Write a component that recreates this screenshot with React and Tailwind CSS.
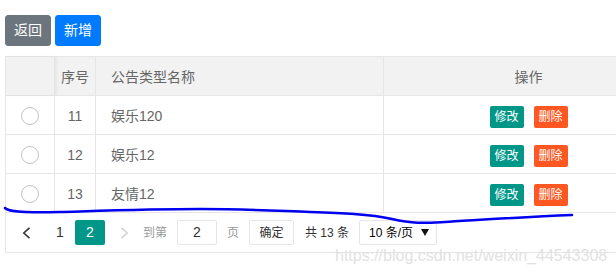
import React from 'react';

const rows = [
  { id: 11, name: '娱乐120' },
  { id: 12, name: '娱乐12' },
  { id: 13, name: '友情12' },
];

const Radio = () => (
  <span className="block w-[18px] h-[18px] rounded-full border-[1.5px] border-[#c2c2c2] bg-white" />
);

const Chevron = ({ dir, color }) => (
  <svg width="9" height="12" viewBox="0 0 9 12" fill="none">
    <path
      d={dir === 'left' ? 'M7.5 0.8 L1.8 6 L7.5 11.2' : 'M1.5 0.8 L7.2 6 L1.5 11.2'}
      stroke={color}
      strokeWidth="1.6"
    />
  </svg>
);

export default function App() {
  return (
    <div
      className="relative w-[616px] h-[275px] overflow-hidden bg-white"
      style={{ fontFamily: '"Liberation Sans", "Noto Sans CJK SC", sans-serif' }}
    >
      <div className="pt-[15px] pl-[5px]">
        {/* Toolbar */}
        <div className="flex gap-[4px]">
          <button className="h-[31px] px-[8px] border border-[#6c757d] bg-[#6c757d] text-white text-[14px] leading-[21px] rounded-[3px]">
            返回
          </button>
          <button className="h-[31px] px-[8px] border border-[#007bff] bg-[#007bff] text-white text-[14px] leading-[21px] rounded-[3px]">
            新增
          </button>
        </div>

        {/* Table */}
        <div className="mt-[10px] w-[700px] border-l border-t border-[#e6e6e6] text-[14px] text-[#666]">
          <div className="flex h-[39px] bg-[#f2f2f2] border-b border-[#e6e6e6]">
            <div className="w-[49px] border-r border-[#e6e6e6] shadow-[2px_0_3px_rgba(0,0,0,0.05)]" />
            <div className="w-[41px] border-r border-[#e6e6e6] pt-[2px] flex items-center justify-center">序号</div>
            <div className="w-[288px] border-r border-[#e6e6e6] pt-[2px] flex items-center pl-[15px]">公告类型名称</div>
            <div className="w-[290px] border-r border-[#e6e6e6] pt-[2px] flex items-center justify-center">操作</div>
          </div>
          {rows.map((r) => (
            <div key={r.id} className="flex h-[39px] border-b border-[#e6e6e6]">
              <div className="w-[49px] border-r border-[#e6e6e6] pt-[2px] flex items-center justify-center">
                <Radio />
              </div>
              <div className="w-[41px] border-r border-[#e6e6e6] pt-[2px] flex items-center justify-center">{r.id}</div>
              <div className="w-[288px] border-r border-[#e6e6e6] pt-[2px] flex items-center pl-[15px]">{r.name}</div>
              <div className="w-[290px] border-r border-[#e6e6e6] pt-[3px] flex items-center justify-center gap-[10px]">
                <span className="h-[22px] w-[34px] flex items-center justify-center bg-[#009688] text-white text-[12px] rounded-[2px]">修改</span>
                <span className="h-[22px] w-[34px] flex items-center justify-center bg-[#ff5722] text-white text-[12px] rounded-[2px]">删除</span>
              </div>
            </div>
          ))}

          {/* Pagination */}
          <div className="flex items-center h-[40px] border-b border-[#e6e6e6] text-[12px] text-[#333]">
            <span className="ml-[5px] w-[30px] h-[25px] flex items-center justify-center">
              <Chevron dir="left" color="#333" />
            </span>
            <span className="ml-[4px] w-[30px] h-[25px] flex items-center justify-center text-[14px]">1</span>
            <span className="w-[30px] h-[25px] flex items-center justify-center bg-[#009688] text-white text-[14px] rounded-[2px]">2</span>
            <span className="ml-[4px] w-[30px] h-[25px] flex items-center justify-center">
              <Chevron dir="right" color="#d2d2d2" />
            </span>
            <span className="ml-[4px] text-[#999]">到第</span>
            <span className="ml-[10px] w-[40px] h-[25px] flex items-center justify-center border border-[#e6e6e6] rounded-[2px] text-[14px]">2</span>
            <span className="ml-[10px] text-[#999]">页</span>
            <span className="ml-[10px] w-[45px] h-[25px] flex items-center justify-center border border-[#e6e6e6] rounded-[2px]">确定</span>
            <span className="ml-[11px]">共 13 条</span>
            <span className="ml-[10px] w-[78px] h-[25px] flex items-center justify-between pl-[9px] pr-[7px] border border-[#e6e6e6] rounded-[2px] text-black text-[12px]">
              10 条/页
              <svg width="8" height="7" viewBox="0 0 8 7">
                <path d="M0 0 H8 L4 7 Z" fill="#111" />
              </svg>
            </span>
          </div>
        </div>
      </div>

      {/* hand-drawn annotation */}
      <svg className="absolute left-0 top-0 pointer-events-none" width="616" height="275">
        <path
          d="M5 208 C 9 212, 25 213, 60 212 S 150 209, 200 209 S 280 211, 310 212 S 370 214, 392 219 S 425 223, 445 222 S 520 217, 572 215"
          stroke="#0000f0"
          strokeWidth="2.5"
          fill="none"
          strokeLinecap="round"
        />
      </svg>

      {/* watermark */}
      <div className="absolute left-[335px] top-[247px] text-[16px] leading-[18px] text-[#e2e2e2] pointer-events-none">
        https://blog.csdn.net/weixin_44543308
      </div>
    </div>
  );
}
